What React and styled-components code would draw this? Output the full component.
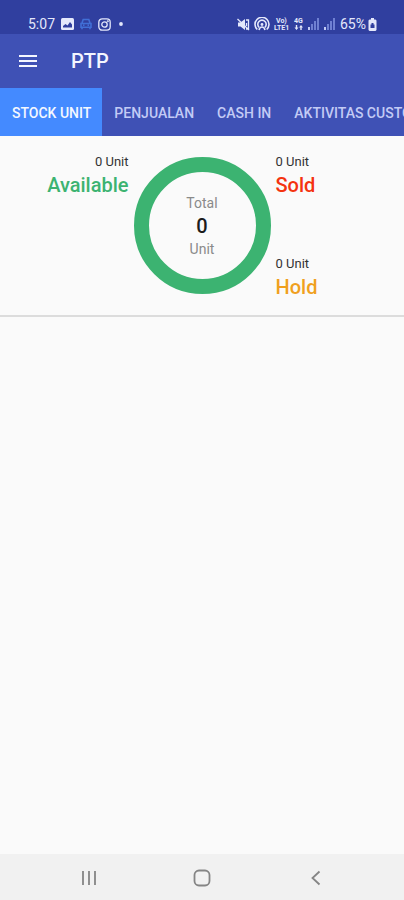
import React, { useState } from 'react';
import styled, { createGlobalStyle } from 'styled-components';

const Colors = {
  statusBar: '#303f9f',
  primary: '#3f51b5',
  activeTab: '#448aff',
  tabText: '#c3cbf5',
  background: '#fafafa',
  outline: '#dcdcdc',
  navBar: '#f1f1f1',
  navIcon: '#858585',
  text: '#1c1c1c',
  countText: '#333333',
  softText: '#8a8a8a',
  available: '#3cb371',
  sold: '#f4330f',
  hold: '#f0a01e',
};

const TABS = ['Stock Unit', 'Penjualan', 'Cash In', 'Aktivitas Customer'];

const GlobalStyle = createGlobalStyle`
  * {
    box-sizing: border-box;
  }

  body {
    margin: 0;
    background: ${Colors.background};
    color: ${Colors.text};
    font-family: Roboto, 'Liberation Sans', sans-serif;
  }
`;

const Screen = styled.div`
  display: flex;
  flex-direction: column;
  min-height: 100vh;
`;

const StatusBar = styled.div`
  display: flex;
  justify-content: space-between;
  height: 34px;
  padding: 14px 27px 0 28px;
  background: ${Colors.statusBar};
  color: #e4e8fb;
  font-size: 14px;
  line-height: 20px;
`;

const StatusGroup = styled.div`
  display: flex;
  align-items: center;
  height: 20px;
  gap: ${props => props.$gap}px;
`;

const AppBar = styled.header`
  display: flex;
  align-items: center;
  gap: 31px;
  height: 54px;
  padding: 0 16px;
  background: ${Colors.primary};
  color: #f4f6ff;
`;

const IconButton = styled.button`
  display: flex;
  align-items: center;
  justify-content: center;
  padding: 0;
  border: 0;
  background: none;
  color: inherit;
`;

const Title = styled.h1`
  margin: 0;
  font-size: 20px;
  font-weight: 500;
  line-height: 24px;
`;

const TabBar = styled.div`
  display: flex;
  height: 48px;
  overflow-x: auto;
  scrollbar-width: none;
  background: ${Colors.primary};
`;

const Tab = styled.button`
  flex: none;
  padding: 2px 11px 0 12px;
  border: 0;
  background: ${props => (props.$active ? Colors.activeTab : 'transparent')};
  color: ${props => (props.$active ? '#f4f8ff' : Colors.tabText)};
  font-family: inherit;
  font-size: 14px;
  font-weight: 500;
  text-transform: uppercase;
`;

const Summary = styled.section`
  display: grid;
  grid-template-columns: 1fr 137px 1fr;
  gap: 5px;
  padding: 21px 0;
  border-bottom: 2px solid ${Colors.outline};
`;

const StatColumn = styled.div`
  display: flex;
  flex-direction: column;
  justify-content: space-between;
  height: 148px;
  margin: -5px 0 -6px;
  text-align: ${props => props.$align};
`;

const StatCount = styled.div`
  color: ${Colors.countText};
  font-size: 13px;
  line-height: 20px;
`;

const StatLabel = styled.div`
  color: ${props => props.$color};
  font-size: 20px;
  font-weight: 500;
  line-height: 26px;
`;

const Ring = styled.div`
  display: flex;
  flex-direction: column;
  align-items: center;
  justify-content: center;
  height: 137px;
  border: 15px solid ${Colors.available};
  border-radius: 50%;
`;

const RingText = styled.div`
  color: ${Colors.softText};
  font-size: 14px;
  line-height: 22px;
`;

const RingTotal = styled.div`
  font-size: 20px;
  font-weight: 500;
  line-height: 24px;
`;

const Content = styled.main`
  flex: 1;
`;

const NavBar = styled.nav`
  display: grid;
  grid-template-columns: repeat(3, 1fr);
  height: 46px;
  padding: 2px 32px 0;
  background: ${Colors.navBar};
  color: ${Colors.navIcon};
`;

const PictureIcon = () => (
  <svg width="13" height="12" viewBox="0 0 13 12">
    <rect width="13" height="12" rx="1.5" fill="currentColor" />
    <path d="M2 9.5V8l2.500-2 2 1.500L9 4l2 2.500v3z" fill={Colors.statusBar} />
  </svg>
);

const CarIcon = () => (
  <svg width="12" height="12" viewBox="0 0 12 12" fill="none" stroke="#416fd6" strokeWidth="1.6">
    <path d="M2 5 3.2 1.5h5.6L10 5M1 5.5h10v3.8H1zM2 9v2.2M10 9v2.2M3 7.3h1.5M7.5 7.3H9" />
  </svg>
);

const CameraIcon = () => (
  <svg width="13" height="13" viewBox="0 0 13 13" fill="none" stroke="currentColor" strokeWidth="1.3">
    <rect x="0.8" y="0.8" width="11.4" height="11.4" rx="3.4" />
    <circle cx="6.5" cy="6.5" r="2.7" />
    <circle cx="9.8" cy="3.3" r="0.4" />
  </svg>
);

const DotIcon = () => (
  <svg width="6" height="4" viewBox="0 0 6 4">
    <circle cx="4" cy="2" r="1.9" fill="currentColor" />
  </svg>
);

const MuteIcon = () => (
  <svg width="13" height="13" viewBox="0 0 13 13" fill="none" stroke="currentColor" strokeWidth="1.3">
    <path d="M1 4.5h2.5L8 1v11L3.5 8.500H1z" fill="currentColor" stroke="none" />
    <path d="M0.5 1 12 12M9 2h2.500v9H9M9.500 5v3" />
  </svg>
);

const HotspotIcon = () => (
  <svg width="16" height="14" viewBox="0 0 16 14" fill="none" stroke="currentColor" strokeWidth="1.6">
    <path d="M3.3 12.5a7 7 0 1 1 9.4 0M5.2 10.5a4.200 4.200 0 1 1 5.6 0" />
    <circle cx="8" cy="7.5" r="1.400" fill="currentColor" stroke="none" />
    <path d="M5 13c.5-2 1.5-3 3-3s2.5 1 3 3" />
  </svg>
);

const VolteIcon = () => (
  <svg width="16" height="14" viewBox="0 0 16 14" fill="currentColor" fontSize="7" fontWeight="700">
    <text x="2" y="6">Vo)</text>
    <text x="0" y="13">LTE1</text>
  </svg>
);

const DataIcon = () => (
  <svg width="10" height="14" viewBox="0 0 10 14" fill="currentColor" fontSize="7" fontWeight="700">
    <text x="0" y="6">4G</text>
    <path d="M2.500 13 0.500 10.500h1.300V8h1.400v2.500h1.300zM7 8l2 2.500H7.700V13H6.300v-2.500H5z" />
  </svg>
);

const SignalIcon = () => (
  <svg width="12" height="12" viewBox="0 0 12 12" fill="#6f80d2">
    <rect x="0" y="9" width="2" height="3" fill="#c3cbf5" />
    <rect x="3" y="6" width="2" height="6" />
    <rect x="6" y="3" width="2" height="9" />
    <rect x="9" y="0" width="2" height="12" />
  </svg>
);

const BatteryIcon = () => (
  <svg width="9" height="13" viewBox="0 0 9 13">
    <path d="M3 0h3v1.5h1.5l1 1V12l-1 1h-6l-1-1V2.5l1-1H3z" fill="currentColor" />
    <path d="M3.5 5v1.5h-1V10h4V6.5h-1V5z" fill={Colors.statusBar} />
  </svg>
);

const MenuIcon = () => (
  <svg width="24" height="24" viewBox="0 0 24 24" fill="currentColor">
    <path d="M3 6h18v2H3zM3 11h18v2H3zM3 16h18v2H3z" />
  </svg>
);

const RecentsIcon = () => (
  <svg width="16" height="16" viewBox="0 0 16 16" stroke="currentColor" strokeWidth="1.8">
    <path d="M2 1v14M8 1v14M14 1v14" />
  </svg>
);

const HomeIcon = () => (
  <svg width="18" height="18" viewBox="0 0 18 18" fill="none" stroke="currentColor" strokeWidth="1.8">
    <rect x="1.5" y="1.5" width="15" height="15" rx="4.5" />
  </svg>
);

const BackIcon = () => (
  <svg width="16" height="16" viewBox="0 0 16 16" fill="none" stroke="currentColor" strokeWidth="1.8">
    <path d="M12.5 1.5 5.5 8l7 6.5" />
  </svg>
);

const Stat = ({ count, label, color }) => (
  <div>
    <StatCount>{count} Unit</StatCount>
    <StatLabel $color={color}>{label}</StatLabel>
  </div>
);

const App = () => {
  const [activeTab, setActiveTab] = useState(TABS[0]);

  return (
    <>
      <GlobalStyle />
      <Screen>
        <StatusBar>
          <StatusGroup $gap={6}>
            5:07
            <PictureIcon />
            <CarIcon />
            <CameraIcon />
            <DotIcon />
          </StatusGroup>
          <StatusGroup $gap={4}>
            <MuteIcon />
            <HotspotIcon />
            <VolteIcon />
            <DataIcon />
            <SignalIcon />
            <SignalIcon />
            <StatusGroup $gap={2}>
              65%
              <BatteryIcon />
            </StatusGroup>
          </StatusGroup>
        </StatusBar>
        <AppBar>
          <IconButton aria-label="Menu">
            <MenuIcon />
          </IconButton>
          <Title>PTP</Title>
        </AppBar>
        <TabBar role="tablist">
          {TABS.map(tab => (
            <Tab
              key={tab}
              role="tab"
              aria-selected={tab === activeTab}
              $active={tab === activeTab}
              onClick={() => setActiveTab(tab)}
            >
              {tab}
            </Tab>
          ))}
        </TabBar>
        <Content>
          <Summary>
            <StatColumn $align="right">
              <Stat count={0} label="Available" color={Colors.available} />
            </StatColumn>
            <Ring>
              <RingText>Total</RingText>
              <RingTotal>0</RingTotal>
              <RingText>Unit</RingText>
            </Ring>
            <StatColumn $align="left">
              <Stat count={0} label="Sold" color={Colors.sold} />
              <Stat count={0} label="Hold" color={Colors.hold} />
            </StatColumn>
          </Summary>
        </Content>
        <NavBar>
          <IconButton aria-label="Recent apps">
            <RecentsIcon />
          </IconButton>
          <IconButton aria-label="Home">
            <HomeIcon />
          </IconButton>
          <IconButton aria-label="Back">
            <BackIcon />
          </IconButton>
        </NavBar>
      </Screen>
    </>
  );
};

export default App;
